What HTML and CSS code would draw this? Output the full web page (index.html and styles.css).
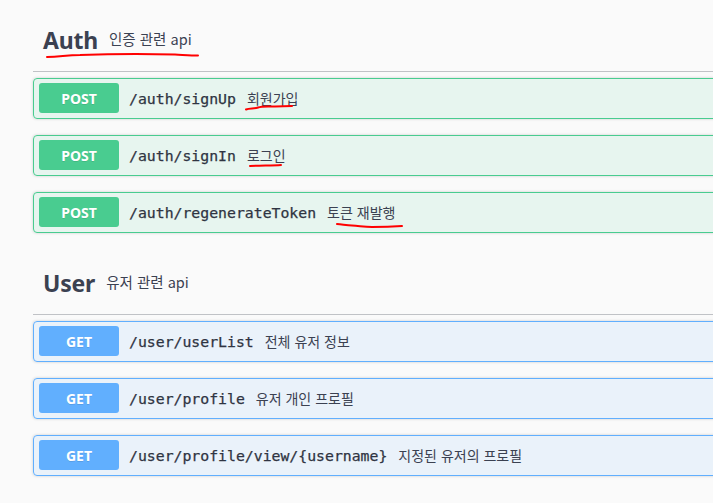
FILE: index.html
```html
<!DOCTYPE html>
<html lang="ko">
<head>
<meta charset="utf-8">
<title>Swagger API</title>
<link rel="stylesheet" href="styles.css">
</head>
<body>
<div class="page">
  <div class="wrapper">
    <section class="tag-section">
      <h4 class="tag"><span class="tag-name">Auth</span><small class="tag-desc">인증 관련 api</small></h4>
      <div class="opblock post">
        <div class="summary"><span class="method">POST</span><span class="path">/auth/signUp</span><span class="desc">회원가입</span></div>
      </div>
      <div class="opblock post">
        <div class="summary"><span class="method">POST</span><span class="path">/auth/signIn</span><span class="desc">로그인</span></div>
      </div>
      <div class="opblock post">
        <div class="summary"><span class="method">POST</span><span class="path">/auth/regenerateToken</span><span class="desc">토큰 재발행</span></div>
      </div>
    </section>
    <section class="tag-section">
      <h4 class="tag"><span class="tag-name">User</span><small class="tag-desc">유저 관련 api</small></h4>
      <div class="opblock get">
        <div class="summary"><span class="method">GET</span><span class="path">/user/userList</span><span class="desc">전체 유저 정보</span></div>
      </div>
      <div class="opblock get">
        <div class="summary"><span class="method">GET</span><span class="path">/user/profile</span><span class="desc">유저 개인 프로필</span></div>
      </div>
      <div class="opblock get">
        <div class="summary"><span class="method">GET</span><span class="path">/user/profile/view/{username}</span><span class="desc">지정된 유저의 프로필</span></div>
      </div>
    </section>
  </div>
  <svg class="marks" width="713" height="503" viewBox="0 0 713 503" aria-hidden="true">
    <path d="M47 57 C60 57 66 55 80 55 C110 54 150 54 175 54.5 C185 55 192 55.5 198 55.5" />
    <path d="M246 109.5 C250 108 254 109 258 107.5 C262 106 266 106.5 275 106.5 L292 106" />
    <path d="M250 166 C260 165.5 272 165.5 281 165" />
    <path d="M337 224 C343 224.5 347 225.5 352 225.5 C360 226 364 227 372 227 C385 227 395 226.5 402 226" />
  </svg>
</div>
</body>
</html>
```

FILE: styles.css
```css
html, body {
  margin: 0;
  padding: 0;
}
body {
  background: #fafafa;
  width: 713px;
  height: 503px;
  overflow: hidden;
  color: #3b4151;
}
.page {
  position: relative;
  width: 713px;
  height: 503px;
  overflow: hidden;
}
.wrapper {
  width: 760px;
  padding: 6px 0 0 33px;
  display: flex;
  flex-direction: column;
}
.tag-section {
  display: flex;
  flex-direction: column;
}
.tag {
  margin: 0 0 6px;
  height: 65px;
  box-sizing: content-box;
  display: flex;
  align-items: center;
  padding: 0 0 0 10px;
  border-bottom: 1px solid rgba(59, 65, 81, 0.3);
  font-family: "Noto Sans", "Noto Sans CJK KR", sans-serif;
  color: #3b4151;
}
.tag-name {
  font-size: 23px;
  font-weight: 700;
  letter-spacing: -0.2px;
  position: relative;
  top: 1px;
}
.tag-desc {
  font-family: "Noto Sans CJK KR", sans-serif;
  font-size: 14.5px;
  font-weight: 400;
  padding-left: 11px;
  position: relative;
  top: 0;
}
.opblock {
  border: 1px solid;
  border-radius: 4px;
  margin: 0 0 16px;
  box-shadow: 0 0 3px rgba(0, 0, 0, 0.19);
}
.opblock.post {
  background: rgba(73, 204, 144, 0.1);
  border-color: #49cc90;
}
.opblock.get {
  background: rgba(97, 175, 254, 0.1);
  border-color: #61affe;
}
.summary {
  display: flex;
  align-items: center;
  padding: 4px 5px 5px;
}
.method {
  width: 80px;
  height: 30px;
  display: flex;
  align-items: center;
  justify-content: center;
  border-radius: 3px;
  color: #fff;
  font-family: "Noto Sans", sans-serif;
  font-size: 14px;
  font-weight: 700;
  text-shadow: 0 1px 0 rgba(0, 0, 0, 0.1);
}
.post .method { background: #49cc90; }
.get .method { background: #61affe; }
.path {
  padding: 0 10px;
  font-family: "DejaVu Sans Mono", monospace;
  font-size: 14.8px;
  font-weight: 400;
  color: #2f3442;
  -webkit-text-stroke: 0.25px #2f3442;
}
.desc {
  font-family: "Noto Sans CJK KR", sans-serif;
  font-size: 14px;
  color: #3b4151;
  padding-left: 1px;
}
.marks {
  position: absolute;
  left: 0;
  top: 0;
  pointer-events: none;
}
.marks path {
  fill: none;
  stroke: #f00;
  stroke-width: 2;
  stroke-linecap: round;
}
```
